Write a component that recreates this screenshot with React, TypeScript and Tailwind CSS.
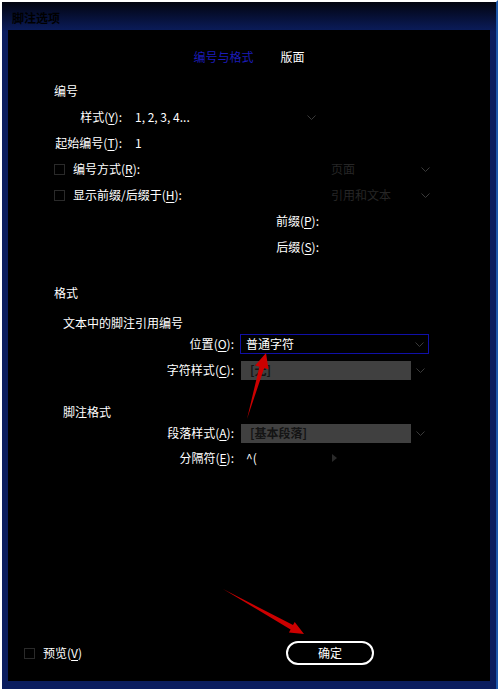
import React from 'react';

const Chevron = () => (
  <svg width="9" height="5" viewBox="0 0 9 5" className="shrink-0">
    <polyline points="0.5,0.5 4.5,4.5 8.5,0.5" fill="none" stroke="#3a3a3a" strokeWidth="1" />
  </svg>
);

const Key = ({ k, colon = true }: { k: string; colon?: boolean }) => (
  <>
    (<span className="underline underline-offset-2">{k}</span>){colon ? ':' : ''}
  </>
);

const Checkbox = () => <span className="h-[11px] w-[11px] shrink-0 border border-[#2a2a2a]" />;

export default function App() {
  return (
    <div className="relative h-[689px] w-[498px] border-l-2 border-t-2 border-r-2 border-l-white border-t-white border-r-[#1c56a8] bg-[linear-gradient(to_bottom,#02040f_0px,#0b1d5e_30px,#0b1d5e_100%)] px-[6px] pb-[8px] font-['Noto_Sans_CJK_SC',sans-serif]">
      {/* Title bar */}
      <div className="flex h-[28px] items-center pl-[4px] pt-[4px] text-[12px] font-semibold text-black">脚注选项</div>

      {/* Content */}
      <div className="flex h-[651px] w-[482px] flex-col bg-black text-[12px] leading-[16px] text-white">
        {/* Tabs */}
        <div className="mt-[19px] flex h-[16px] justify-center gap-[27px]">
          <span className="text-[#1c1cb8]">编号与格式</span>
          <span>版面</span>
        </div>

        {/* 编号 */}
        <div className="mt-[12px] flex h-[27px] items-center pl-[46px]">编号</div>
        <div className="flex h-[26px] items-center">
          <span className="w-[114px] text-right">
            样式<Key k="Y" />
          </span>
          <div className="ml-[13px] flex w-[181px] items-center justify-between">
            <span>1, 2, 3, 4...</span>
            <Chevron />
          </div>
        </div>
        <div className="flex h-[26px] items-center">
          <span className="w-[114px] text-right">
            起始编号<Key k="T" />
          </span>
          <span className="ml-[13px]">1</span>
        </div>
        <div className="flex h-[26px] items-center">
          <div className="flex w-[323px] items-center pl-[46px]">
            <Checkbox />
            <span className="ml-[8px]">
              编号方式<Key k="R" />
            </span>
          </div>
          <div className="flex w-[99px] items-center justify-between text-[#262626]">
            <span>页面</span>
            <Chevron />
          </div>
        </div>
        <div className="flex h-[26px] items-center">
          <div className="flex w-[323px] items-center pl-[46px]">
            <Checkbox />
            <span className="ml-[8px]">
              显示前缀/后缀于<Key k="H" />
            </span>
          </div>
          <div className="flex w-[99px] items-center justify-between text-[#262626]">
            <span>引用和文本</span>
            <Chevron />
          </div>
        </div>
        <div className="flex h-[26px] items-center">
          <span className="w-[311px] text-right">
            前缀<Key k="P" />
          </span>
        </div>
        <div className="flex h-[26px] items-center">
          <span className="w-[311px] text-right">
            后缀<Key k="S" />
          </span>
        </div>

        {/* 格式 */}
        <div className="mt-[25px] flex h-[16px] items-center pl-[46px]">格式</div>
        <div className="mt-[14px] flex h-[16px] items-center pl-[55px]">文本中的脚注引用编号</div>
        <div className="flex h-[26px] items-center">
          <span className="w-[226px] text-right">
            位置<Key k="O" />
          </span>
          <div className="ml-[6px] flex h-[20px] w-[189px] items-center justify-between border border-[#1010a8] pl-[5px] pr-[4px]">
            <span>普通字符</span>
            <Chevron />
          </div>
        </div>
        <div className="flex h-[26px] items-center">
          <span className="w-[226px] text-right">
            字符样式<Key k="C" />
          </span>
          <div className="ml-[7px] flex h-[19px] w-[170px] items-center bg-[#404040] pl-[9px] font-semibold text-[#141414]">
            [无]
          </div>
          <span className="ml-[5px]">
            <Chevron />
          </span>
        </div>
        <div className="mt-[21px] flex h-[16px] items-center pl-[55px]">脚注格式</div>
        <div className="flex h-[26px] items-center">
          <span className="w-[226px] text-right">
            段落样式<Key k="A" />
          </span>
          <div className="ml-[7px] flex h-[19px] w-[170px] items-center bg-[#404040] pl-[9px] font-semibold text-[#141414]">
            [基本段落]
          </div>
          <span className="ml-[5px]">
            <Chevron />
          </span>
        </div>
        <div className="flex h-[24px] items-center">
          <span className="w-[226px] text-right">
            分隔符<Key k="E" />
          </span>
          <span className="ml-[12px] w-[86px]">^(</span>
          <span className="h-0 w-0 border-y-[4px] border-l-[5px] border-y-transparent border-l-[#2a2a2a]" />
        </div>

        {/* Footer */}
        <div className="mb-[16px] mt-auto flex h-[24px] items-center">
          <div className="flex w-[278px] items-center pl-[16px]">
            <Checkbox />
            <span className="ml-[8px]">
              预览<Key k="V" colon={false} />
            </span>
          </div>
          <button className="flex h-[24px] w-[88px] items-center justify-center rounded-full border-2 border-white text-[12px] text-white">
            确定
          </button>
        </div>
      </div>

      {/* Annotation arrows */}
      <svg
        width="498"
        height="689"
        viewBox="0 0 498 689"
        className="pointer-events-none absolute left-[-2px] top-[-2px]"
      >
        <polygon
          points="247,419 259.4,366.7 255.1,365.5 266,353 268.5,369.3 264.2,368.1"
          fill="#cc0000"
        />
        <polygon
          points="223,589 293,625 294.7,622 304,634 288.9,632.4 290.6,629.4"
          fill="#cc0000"
        />
      </svg>
    </div>
  );
}
